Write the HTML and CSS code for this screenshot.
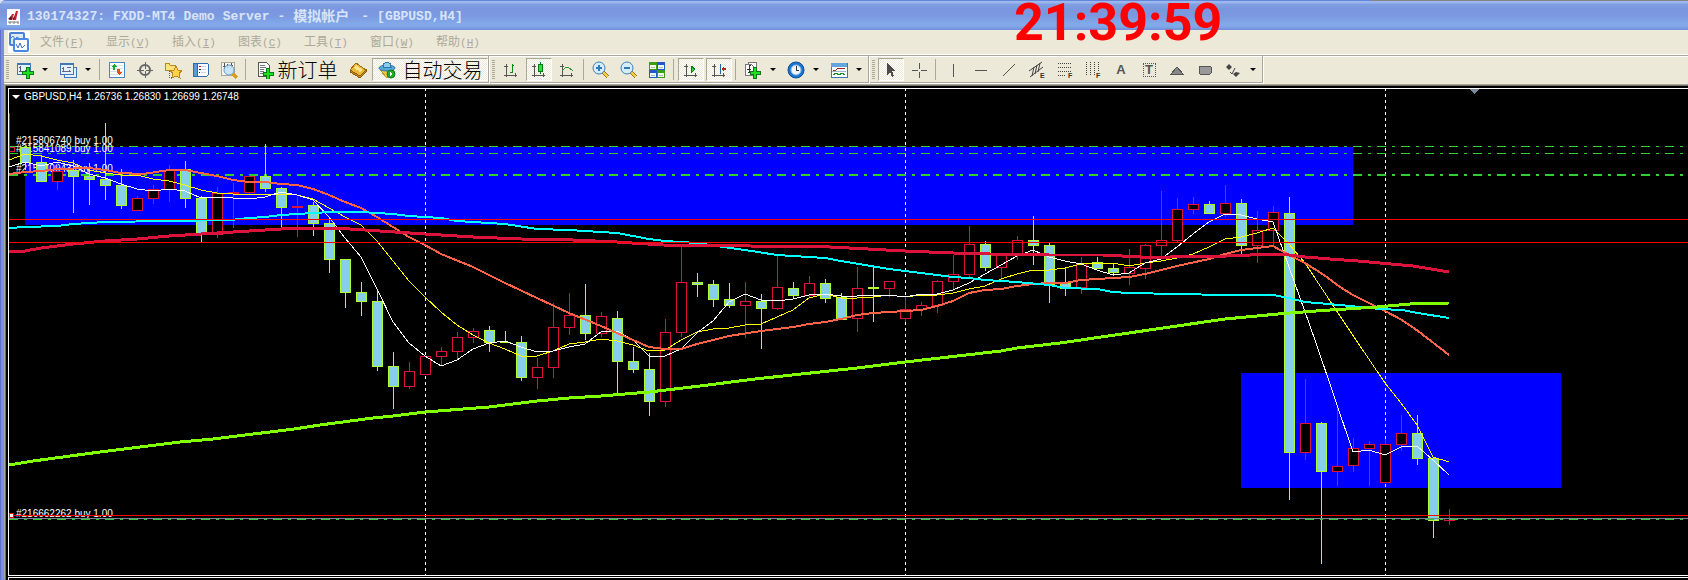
FILE: index.html
```html
<!DOCTYPE html>
<html lang="zh-CN">
<head>
  <meta charset="UTF-8">
  <title>130174327: FXDD-MT4 Demo Server - 模拟帐户 - [GBPUSD,H4]</title>
  <link rel="stylesheet" href="styles.css">
</head>
<body>

  <div class="window">

    <!-- Title bar -->
    <header class="titlebar">
      <svg class="app-icon" width="13" height="16" viewBox="0 0 13 16">
        <rect width="13" height="16" fill="#fff"/>
        <path d="M2 11L5 5H7L5 11ZM6 11L9 2H11L9 11Z" fill="#c8202c"/>
        <path d="M1 10L4 7L5 11ZM5 10L8 7L7 11Z" fill="#5c1418"/>
        <path d="M1 13H12M2 14H4M6 14H8M10 14H12" stroke="#777"/>
      </svg>
      <h1 class="title">
        <span>130174327:</span>
        <span>FXDD-MT4</span>
        <span>Demo</span>
        <span>Server</span>
        <span>-</span>
        <span class="title-cn">模拟帐户</span>
        <span>-</span>
        <span>[GBPUSD,H4]</span>
      </h1>
      <time class="clock">21:39:59</time>
    </header>

    <!-- Menu -->
    <nav class="menubar">
      <svg class="menu-icon" width="22" height="22" viewBox="0 0 22 22">
        <rect width="22" height="22" fill="#fff"/>
        <rect x="2" y="2" width="14" height="12" rx="1" fill="#dce9fa" stroke="#4a80d0" stroke-width="2"/>
        <path d="M3 7L5 5L7 8L9 6L12 8" fill="none" stroke="#4a80d0"/>
        <rect x="6" y="8" width="14" height="12" rx="1" fill="#fff" stroke="#4a88e0" stroke-width="2"/>
        <path d="M8 13L10 17L12 12L14 17L17 14" fill="none" stroke="#3a70c8"/>
      </svg>
      <button type="button">文件<span class="key">(<u>F</u>)</span></button>
      <button type="button">显示<span class="key">(<u>V</u>)</span></button>
      <button type="button">插入<span class="key">(<u>I</u>)</span></button>
      <button type="button">图表<span class="key">(<u>C</u>)</span></button>
      <button type="button">工具<span class="key">(<u>T</u>)</span></button>
      <button type="button">窗口<span class="key">(<u>W</u>)</span></button>
      <button type="button">帮助<span class="key">(<u>H</u>)</span></button>
    </nav>

    <!-- Toolbars -->
    <div class="toolbars">

      <div class="toolbar">
        <button type="button" class="tool" aria-label="新图表">
          <svg viewBox="0 0 18 18">
            <rect x="1" y="2" width="13" height="11" fill="#e4f0fb" stroke="#3f78b4"/>
            <path d="M1 3H14" stroke="#3f78b4" stroke-width="2"/>
            <path d="M4 5V11M3 6H5M3 10H11M9 9V11" stroke="#557" fill="none"/>
            <path d="M10 6H13V10H17V13H13V17H10V13H6V10H10Z" fill="#1fe01f" stroke="#0a7a14"/>
          </svg>
        </button>
        <button type="button" class="drop" aria-label="新图表列表"></button>
        <button type="button" class="tool" aria-label="配置文件">
          <svg viewBox="0 0 18 18">
            <rect x="5" y="6" width="12" height="10" fill="#e4f0fb" stroke="#3f78b4"/>
            <rect x="1" y="2" width="13" height="11" fill="#e4f0fb" stroke="#3f78b4"/>
            <path d="M1 3H14" stroke="#3f78b4" stroke-width="2"/>
            <path d="M4 6V11M3 7H5M3 10H12M10 9V11M8 6H12" stroke="#668" fill="none"/>
          </svg>
        </button>
        <button type="button" class="drop" aria-label="配置文件列表"></button>
        <span class="sep"></span>
        <button type="button" class="tool" aria-label="市场报价">
          <svg viewBox="0 0 18 18">
            <rect x="1" y="1" width="15" height="15" fill="#fff" stroke="#4a88c4"/>
            <path d="M2 4H15M2 7H15M2 10H15M2 13H15" stroke="#d4e2ee"/>
            <path d="M6 3L9 6H7V9H5V6H3Z" fill="#18a828"/>
            <path d="M9 8H12V11H14L11 14L8 11H9Z" fill="#e05018"/>
          </svg>
        </button>
        <button type="button" class="tool" aria-label="数据窗口">
          <svg viewBox="0 0 18 18">
            <circle cx="9" cy="9" r="5" fill="none" stroke="#666" stroke-width="2"/>
            <path d="M9 1V17M1 9H17" stroke="#666"/>
            <rect x="8" y="8" width="2" height="2" fill="#ece9d8"/>
          </svg>
        </button>
        <button type="button" class="tool" aria-label="导航">
          <svg viewBox="0 0 18 18">
            <path d="M1 2H5L6 4H11V9H1Z" fill="#ffe27a" stroke="#b88a18"/>
            <path d="M5 10V16H9" stroke="#555" fill="none" stroke-dasharray="1 1"/>
            <path d="M12 5L14 9L18 10L15 12L16 17L12 15L8 17L9 12L6 10L10 9Z" fill="#ffd24a" stroke="#b8861c"/>
          </svg>
        </button>
        <button type="button" class="tool" aria-label="终端">
          <svg viewBox="0 0 18 18">
            <rect x="1" y="2" width="15" height="13" rx="1" fill="#fff" stroke="#2c6cb0"/>
            <rect x="1" y="2" width="4" height="13" fill="#5a9ad8" stroke="#2c6cb0"/>
            <path d="M7 5H9" stroke="#e02020"/>
            <path d="M7 8H9M7 11H8" stroke="#222"/>
            <path d="M9 5H14M9 8H14M9 11H14" stroke="#cdd6de"/>
          </svg>
        </button>
        <button type="button" class="tool" aria-label="策略测试">
          <svg viewBox="0 0 18 18">
            <rect x="1" y="1" width="13" height="13" fill="#f6f4ee" stroke="#aaa69a"/>
            <path d="M4 2V8M3 5H6M7 3V7M11 2V7M10 4H13" stroke="#555"/>
            <circle cx="9" cy="9" r="5" fill="#bfe0f8" fill-opacity=".85" stroke="#6a9cc8"/>
            <path d="M13 13L17 17" stroke="#d89c20" stroke-width="3"/>
          </svg>
        </button>
        <span class="sep"></span>
        <button type="button" class="tool tool-text">
          <svg viewBox="0 0 18 18">
            <path d="M2 1H10L13 4V15H2Z" fill="#fafafa" stroke="#555"/>
            <path d="M4 4H9M4 6H10M4 8H8M4 10H8M4 12H7" stroke="#777"/>
            <path d="M10 7H13V11H17V14H13V18H10V14H7V11H10Z" fill="#1fe01f" stroke="#0a7a14"/>
          </svg>
          新订单
        </button>
        <button type="button" class="tool" aria-label="MetaEditor">
          <svg viewBox="0 0 18 18">
            <path d="M7 2L17 9L11 15L1 9Z" fill="#ecb838" stroke="#a06c10"/>
            <path d="M7 4L14 9L11 11L5 7Z" fill="#ffe490"/>
            <path d="M1 9V11L11 17L17 11V9L11 15Z" fill="#c88a20" stroke="#8c5c0c"/>
          </svg>
        </button>
        <button type="button" class="tool tool-text auto pressed">
          <svg viewBox="0 0 18 18">
            <path d="M2 9L9 17L16 9Z" fill="#f0c83c" stroke="#c0982c"/>
            <ellipse cx="9" cy="7" rx="8" ry="3" fill="#58a8d8" stroke="#2c78ac"/>
            <path d="M5 6C5 0 13 0 13 6Z" fill="#8ccaf0" stroke="#2c78ac"/>
            <circle cx="13" cy="13" r="4" fill="#1cac2c" stroke="#0c7c1c"/>
            <path d="M12 11L15 13L12 15Z" fill="#fff"/>
          </svg>
          自动交易
        </button>
      </div>

      <div class="toolbar">
        <button type="button" class="tool" aria-label="柱状图">
          <svg viewBox="0 0 18 18">
            <path d="M4 3V16M2 5H6M2 14H15M13 12V16" stroke="#555" fill="none"/>
            <path d="M10 3V12M10 4H12M8 11H10" stroke="#0a8a1a" stroke-width="1"/>
          </svg>
        </button>
        <button type="button" class="tool pressed" aria-label="阴阳烛">
          <svg viewBox="0 0 18 18">
            <path d="M4 3V16M2 5H6M2 14H15M13 12V16" stroke="#555" fill="none"/>
            <path d="M10 1V13" stroke="#0a7a14"/>
            <rect x="8" y="3" width="4" height="7" fill="#28e040" stroke="#0a7a14"/>
          </svg>
        </button>
        <button type="button" class="tool" aria-label="折线图">
          <svg viewBox="0 0 18 18">
            <path d="M4 3V16M2 5H6M2 14H15M13 12V16" stroke="#555" fill="none"/>
            <path d="M4 10L8 6H10L15 10" stroke="#2a9438" fill="none"/>
          </svg>
        </button>
        <span class="sep"></span>
        <button type="button" class="tool" aria-label="放大">
          <svg viewBox="0 0 18 18">
            <path d="M11 11L16 16" stroke="#a87810" stroke-width="4"/>
            <path d="M11 11L16 16" stroke="#f4cc48" stroke-width="2"/>
            <circle cx="7" cy="7" r="6" fill="#d4ecfc" stroke="#3c80bc" stroke-width="1"/>
            <path d="M7 4V10M4 7H10" stroke="#3078b4" stroke-width="2"/>
          </svg>
        </button>
        <button type="button" class="tool" aria-label="缩小">
          <svg viewBox="0 0 18 18">
            <path d="M11 11L16 16" stroke="#a87810" stroke-width="4"/>
            <path d="M11 11L16 16" stroke="#f4cc48" stroke-width="2"/>
            <circle cx="7" cy="7" r="6" fill="#d4ecfc" stroke="#3c80bc" stroke-width="1"/>
            <path d="M4 7H10" stroke="#3078b4" stroke-width="2"/>
          </svg>
        </button>
        <button type="button" class="tool" aria-label="平铺窗口">
          <svg viewBox="0 0 18 18">
            <path d="M1 1H9V9H1ZM9 9H17V17H9Z" fill="#3c9c14"/>
            <path d="M9 1H17V9H9ZM1 9H9V17H1Z" fill="#2458c8"/>
            <path d="M2 4H8V8H2ZM10 4H16V8H10ZM2 12H8V16H2ZM10 12H16V16H10Z" fill="#f2f8f0"/>
            <path d="M3 6H7M11 6H15M3 14H7M11 14H15" stroke="#a8c0b8"/>
          </svg>
        </button>
        <span class="sep"></span>
        <button type="button" class="tool pressed" aria-label="自动滚动">
          <svg viewBox="0 0 18 18">
            <path d="M4 3V16M2 5H6M2 14H15M13 12V16" stroke="#555" fill="none"/>
            <path d="M9 5L13 8L9 12Z" fill="#38d048" stroke="#0a7a14"/>
          </svg>
        </button>
        <button type="button" class="tool pressed" aria-label="图表平移">
          <svg viewBox="0 0 18 18">
            <path d="M4 3V16M2 5H6M2 14H15M13 12V16" stroke="#555" fill="none"/>
            <path d="M10 3V13" stroke="#1c64a0"/>
            <path d="M11 8L14 5V7H16V9H14V11Z" fill="#a82c0c"/>
          </svg>
        </button>
        <span class="sep"></span>
        <button type="button" class="tool" aria-label="指标列表">
          <svg viewBox="0 0 18 18">
            <path d="M4 1H12V13H4Z" fill="#fff" stroke="#777"/>
            <path d="M1 3H7L10 6V14H1Z" fill="#fafafa" stroke="#777"/>
            <path d="M7 4C5 4 5 6 5 12M3 8H7" stroke="#333" fill="none"/>
            <path d="M9 6H12V10H16V13H12V17H9V13H6V10H9Z" fill="#1fe01f" stroke="#0a7a14"/>
          </svg>
        </button>
        <button type="button" class="drop" aria-label="指标菜单"></button>
        <button type="button" class="tool" aria-label="时间周期">
          <svg viewBox="0 0 18 18">
            <circle cx="9" cy="9" r="8" fill="#1c74d0" stroke="#0c4c94"/>
            <circle cx="9" cy="9" r="5" fill="#eef6fc" stroke="#84b8e4"/>
            <path d="M9 5V9H12" stroke="#333" fill="none"/>
          </svg>
        </button>
        <button type="button" class="drop" aria-label="周期菜单"></button>
        <button type="button" class="tool" aria-label="模板">
          <svg viewBox="0 0 18 18">
            <rect x="1" y="2" width="16" height="14" fill="#fff" stroke="#3878b4"/>
            <rect x="1" y="2" width="16" height="4" fill="#64a4dc"/>
            <path d="M3 9H6L8 7H10L12 8L15 7" stroke="#982c0c" fill="none"/>
            <path d="M2 10H16" stroke="#9cb8cc"/>
            <path d="M3 14L6 12L9 14L12 12L15 14" stroke="#189028" fill="none"/>
          </svg>
        </button>
        <button type="button" class="drop" aria-label="模板菜单"></button>
      </div>

      <div class="toolbar">
        <button type="button" class="tool pressed" aria-label="光标">
          <svg viewBox="0 0 18 18"><path d="M5 2V14L8 11L10 16L12 15L10 10H14Z" fill="#4c4c4c"/></svg>
        </button>
        <button type="button" class="tool" aria-label="十字准线">
          <svg viewBox="0 0 18 18"><path d="M9 2V8M9 11V17M2 9H8M11 9H17" stroke="#555" fill="none"/></svg>
        </button>
        <span class="sep"></span>
        <button type="button" class="tool" aria-label="垂直线">
          <svg viewBox="0 0 18 18"><path d="M9 3V16" stroke="#555"/></svg>
        </button>
        <button type="button" class="tool" aria-label="水平线">
          <svg viewBox="0 0 18 18"><path d="M3 9H15" stroke="#555"/></svg>
        </button>
        <button type="button" class="tool" aria-label="趋势线">
          <svg viewBox="0 0 18 18" class="smooth"><path d="M3 15L15 3" stroke="#555"/></svg>
        </button>
        <button type="button" class="tool" aria-label="等距通道">
          <svg viewBox="0 0 18 18" class="smooth">
            <path d="M1 10L14 1M2 16L15 6M4 15L6 6M7 13L9 4M10 11L12 2" stroke="#444"/>
            <text x="12" y="17">E</text>
          </svg>
        </button>
        <button type="button" class="tool" aria-label="斐波那契回调">
          <svg viewBox="0 0 18 18">
            <path d="M2 2H15M2 6H15M2 10H15M2 14H10" stroke="#444" stroke-dasharray="1 1"/>
            <text x="12" y="17">F</text>
          </svg>
        </button>
        <button type="button" class="tool" aria-label="斐波那契时间">
          <svg viewBox="0 0 18 18">
            <path d="M2 1V15M6 1V15M10 1V15M14 1V10" stroke="#444" stroke-dasharray="1 1"/>
            <text x="12" y="17">F</text>
          </svg>
        </button>
        <button type="button" class="tool letter">A</button>
        <button type="button" class="tool letter label-tool"><span>T</span></button>
        <button type="button" class="tool" aria-label="三角形">
          <svg viewBox="0 0 18 18"><path d="M3 13L9 6L15 13Z" fill="#888" stroke="#555"/></svg>
        </button>
        <button type="button" class="tool" aria-label="矩形">
          <svg viewBox="0 0 18 18"><rect x="3" y="5" width="12" height="8" rx="1" fill="#999" stroke="#555"/></svg>
        </button>
        <button type="button" class="tool" aria-label="箭头">
          <svg viewBox="0 0 18 18" class="smooth">
            <path d="M5 3L8 6L5 9L2 6ZM12 11L16 12L12 16L9 13Z" fill="#444"/>
            <path d="M6 11L8 13L11 7" stroke="#444" fill="none"/>
          </svg>
        </button>
        <button type="button" class="drop" aria-label="箭头菜单"></button>
      </div>
    </div>

    <!-- Chart -->
    <main class="workspace">
      <section class="chart">
        <svg id="chart" role="img" aria-label="GBPUSD,H4">
          <g id="plot" transform="translate(-9,-89)"></g>
        </svg>
        <h2 class="quote">
          <span class="quote-arrow"></span>
          <span>GBPUSD,H4</span>
          <span>1.26736 1.26830 1.26699 1.26748</span>
        </h2>
      </section>
      <section class="subchart"></section>
    </main>

  </div>

  <script src="chart.js"></script>
</body>
</html>
```
FILE: styles.css
```css
/* ================================
   Window
   ================================ */
* {
  box-sizing: border-box;
}

body {
  margin: 0;
  background: #dfe4f4;
  font-family: "Liberation Sans", "Noto Sans CJK SC", sans-serif;
}

.window {
  position: relative;
  display: flex;
  flex-direction: column;
  min-height: 100vh;
  background: linear-gradient(to right, #5f70d0 1px, #7b8fdd 1px);
  border-top-left-radius: 6px;
}

button {
  padding: 0;
  border: 0;
  background: none;
  color: inherit;
  font: inherit;
}

/* ================================
   Title bar
   ================================ */
.titlebar {
  display: flex;
  align-items: center;
  gap: 7px;
  height: 30px;
  padding: 3px 0 0 7px;
  background:
    linear-gradient(to right, #6485dc 1371px, #848284 1371px) 0 0 / 100% 1px no-repeat,
    linear-gradient(#6a8ce4 1px, #9db9ee 1px, #9ab4ec 3px, #7f9fe2 4px, #7a96df 10px, #7b99e1 16px, #82a9ea 24px, #80a6e8 27px, #7592de 29px);
  border-top-left-radius: 6px;
}

.title {
  display: flex;
  align-items: center;
  gap: 8px;
  margin: 0;
  color: #d8e4f8;
  font: bold 13px/20px "Liberation Mono", "Noto Sans CJK SC", monospace;
}

.title-cn {
  margin-right: 4px;
  font-size: 14px;
}

/* Desktop clock floating over the window */
.clock {
  position: absolute;
  top: 0;
  left: 1014px;
  color: #f00;
  font: bold 52px/46px Roboto, "Liberation Sans", sans-serif;
}

/* ================================
   Menu
   ================================ */
.menubar {
  display: flex;
  align-items: center;
  height: 24px;
  margin-left: 4px;
  padding-left: 4px;
  background: #ece9d8;
  color: #aca899;
  font: 12px/16px "Noto Sans CJK SC", sans-serif;
}

.menu-icon {
  margin-right: 10px;
}

.menubar button {
  width: 66px;
  text-align: left;
}

.key {
  font: 11px/16px "Liberation Mono", monospace;
}

/* ================================
   Toolbars
   ================================ */
.toolbars {
  display: flex;
  height: 30px;
  margin-left: 4px;
  border-top: 1px solid #fff;
  background: linear-gradient(#aca899 1px, #fff 1px, #fff 2px, #ece9d8 2px);
  color: #000;
}

.toolbar {
  display: flex;
  align-items: center;
  margin-bottom: 1px;
  padding: 3px 0 1px 7px;
  border-right: 1px solid #aca899;
  border-bottom: 1px solid #aca899;
  box-shadow: 1px 1px #fff;
  background: repeating-linear-gradient(#aca899 0 1px, transparent 1px 2px) 2px 5px / 3px 20px no-repeat;
}

.toolbar + .toolbar {
  margin-left: 1px;
}

.tool {
  display: flex;
  flex: none;
  align-items: center;
  justify-content: center;
  width: 26px;
  height: 23px;
  margin: 0 1px;
}

.tool svg {
  flex: none;
  width: 18px;
  height: 18px;
  shape-rendering: crispEdges;
}

.tool svg circle,
.tool svg ellipse,
.tool svg.smooth {
  shape-rendering: auto;
}

.tool text {
  fill: #333;
  font: bold 7px "Liberation Sans", sans-serif;
}

.tool-text {
  gap: 4px;
  width: 95px;
  margin: 0;
  font: 300 20px/22px "Noto Sans CJK SC", sans-serif;
  white-space: nowrap;
}

.auto {
  gap: 7px;
  width: 116px;
}

.pressed {
  border: 1px solid;
  border-color: #aca899 #fff #fff #aca899;
  background: repeating-conic-gradient(#fff 0 25%, #ece9d8 0 50%) 0 0 / 2px 2px;
}

.drop {
  flex: none;
  width: 15px;
  height: 23px;
}

.drop::before {
  content: "";
  display: block;
  width: 0;
  margin-left: 3px;
  border: 3px solid transparent;
  border-top-color: #000;
  border-bottom: 0;
}

.sep {
  flex: none;
  width: 6px;
  height: 21px;
  background: linear-gradient(#aca899, #aca899) 2px 0 / 1px 100% no-repeat;
}

.letter {
  color: #555;
  font: bold 13px/14px "Liberation Sans", sans-serif;
}

.label-tool span {
  width: 13px;
  height: 14px;
  border: 1px dotted #555;
  line-height: 12px;
}

/* ================================
   Chart
   ================================ */
.workspace {
  display: flex;
  flex: 1;
  flex-direction: column;
  gap: 1px;
  margin: 1px 0 0 5px;
  padding: 2px 0 0 2px;
  border: solid #716f64;
  border-width: 1px 0 0 1px;
  background: #000;
  box-shadow: -1px -1px #aca899;
}

.chart {
  position: relative;
  flex: 1;
  border: solid #fff;
  border-width: 1px 0 1px 1px;
}

.chart svg {
  display: block;
  width: 100%;
  height: 486px;
  shape-rendering: crispEdges;
}

.chart text {
  fill: #fff;
  font: 10px "Liberation Sans", sans-serif;
}

.subchart {
  height: 3px;
  border: solid #fff;
  border-width: 1px 0 0 1px;
}

.quote {
  position: absolute;
  top: 1px;
  left: 3px;
  display: flex;
  align-items: center;
  gap: 4px;
  margin: 0;
  color: #fff;
  font: 10px/14px "Liberation Sans", sans-serif;
  white-space: nowrap;
}

.quote-arrow {
  border: 4px solid transparent;
  border-top-color: #fff;
  border-bottom: 0;
}
```
FILE: chart.js
```js
const NS = "http://www.w3.org/2000/svg";
const plot = document.getElementById("plot");

// Bars are 16px apart, the first one sits at x = 9
const FIRST = 9;
const STEP = 16;

// [high, body top, body bottom, low, direction]
const candles = [
  [113, 147, 152, 166, "u"], [146, 147, 163, 170, "d"], [155, 162, 182, 182, "d"], [163, 171, 182, 190, "u"],
  [160, 170, 177, 213, "d"], [163, 176, 180, 205, "d"], [123, 179, 186, 200, "d"], [169, 185, 206, 209, "d"],
  [196, 198, 211, 211, "u"], [185, 189, 199, 204, "u"], [165, 170, 190, 202, "u"], [161, 169, 199, 208, "d"],
  [196, 198, 234, 242, "d"], [187, 193, 235, 238, "u"], [183, 192, 194, 228, "u"], [175, 176, 193, 194, "u"],
  [144, 176, 189, 192, "d"], [187, 188, 208, 228, "d"], [197, 206, 208, 237, "u"], [202, 205, 224, 236, "d"],
  [220, 223, 260, 273, "d"], [259, 259, 293, 308, "d"], [282, 292, 302, 316, "d"], [290, 301, 367, 371, "d"],
  [352, 366, 387, 409, "d"], [362, 371, 387, 389, "u"], [356, 356, 375, 375, "u"], [347, 351, 357, 366, "u"],
  [332, 337, 352, 359, "u"], [328, 331, 338, 343, "u"], [326, 330, 343, 352, "d"], [331, 342, 343, 343, "d"],
  [336, 342, 378, 381, "d"], [358, 367, 378, 389, "u"], [303, 327, 368, 378, "u"], [293, 315, 328, 335, "u"],
  [284, 315, 334, 340, "d"], [312, 316, 334, 337, "u"], [311, 318, 362, 394, "d"], [347, 361, 370, 373, "d"],
  [353, 369, 402, 416, "d"], [319, 332, 402, 407, "u"], [247, 282, 333, 337, "u"], [273, 282, 285, 297, "d"],
  [280, 284, 300, 307, "d"], [283, 299, 306, 308, "d"], [282, 301, 306, 338, "u"], [294, 301, 309, 349, "d"],
  [256, 287, 309, 310, "u"], [282, 288, 296, 299, "d"], [276, 283, 296, 298, "u"], [279, 283, 299, 303, "d"],
  [293, 297, 320, 320, "d"], [267, 288, 319, 332, "u"], [267, 287, 289, 322, "d"], [281, 281, 289, 297, "u"],
  [297, 309, 319, 322, "u"], [302, 305, 310, 316, "u"], [280, 281, 306, 313, "u"], [255, 274, 282, 290, "u"],
  [226, 244, 275, 277, "u"], [241, 244, 268, 271, "d"], [255, 255, 268, 280, "u"], [236, 240, 255, 260, "u"],
  [216, 240, 246, 265, "d"], [243, 245, 285, 303, "d"], [267, 283, 289, 296, "d"], [257, 263, 288, 294, "u"],
  [257, 262, 269, 269, "d"], [264, 268, 273, 276, "d"], [249, 267, 274, 285, "u"], [244, 245, 269, 279, "u"],
  [191, 240, 246, 256, "u"], [198, 209, 241, 242, "u"], [197, 204, 210, 214, "u"], [201, 204, 214, 214, "d"],
  [185, 203, 214, 217, "u"], [199, 203, 246, 254, "d"], [211, 230, 246, 263, "u"], [206, 212, 231, 247, "u"],
  [197, 213, 453, 500, "d"], [379, 423, 453, 460, "u"], [422, 423, 472, 564, "d"], [407, 466, 472, 486, "u"],
  [438, 448, 466, 472, "u"], [441, 444, 449, 486, "u"], [439, 444, 483, 483, "u"], [415, 433, 445, 451, "u"],
  [415, 433, 459, 465, "d"], [458, 458, 521, 538, "d"], [509, 518, 521, 525, "u"]
];

// Moving averages, drawn in this order
const averages = [
  { color: "#ffff00", width: 1, points: "9,160 25,154 41,156 57,160 73,163 89,170 105,173 121,175 137,175 153,179 169,181 185,185 201,190 217,193 233,194 281,194 297,195 313,199 329,208 345,217 361,225 377,241 393,261 409,281 425,297 441,312 457,325 473,335 489,343 505,349 521,356 537,356 553,351 569,344 585,342 601,339 617,341 633,345 649,351 665,350 681,340 697,332 713,329 729,328 745,325 761,324 777,317 793,310 809,298 825,294 841,298 857,298 873,297 889,295 905,297 921,295 937,295 953,293 969,289 985,286 1001,279 1017,274 1033,270 1049,270 1065,268 1081,264 1097,263 1113,263 1129,266 1145,263 1161,261 1177,258 1193,254 1209,247 1225,239 1241,237 1257,233 1273,228 1289,244 1305,263 1340,316 1356,340 1385,383 1401,403 1417,425 1433,457 1449,462" },
  { color: "#ffffff", width: 1, points: "9,167 25,162 41,166 57,162 73,166 89,174 105,178 121,184 137,189 153,191 169,189 185,191 201,198 217,197 233,198 249,199 265,197 281,192 297,195 313,200 329,217 345,238 361,257 377,289 393,322 409,343 425,356 441,366 457,360 473,349 489,343 505,341 521,347 537,352 553,351 569,347 585,344 601,332 617,331 633,340 649,356 665,356 681,349 697,333 713,321 729,302 745,294 761,300 777,301 793,299 809,295 825,294 841,296 857,296 873,295 889,295 905,297 921,294 937,294 953,290 969,283 985,274 1001,265 1017,256 1033,250 1049,257 1065,261 1081,264 1097,270 1113,275 1129,273 1145,263 1161,259 1177,247 1193,234 1209,222 1225,214 1241,215 1257,219 1273,222 1289,267 1315,340 1353,452 1369,450 1385,455 1401,447 1417,446 1433,460 1449,475" },
  { color: "#ff6347", width: 2, points: "9,174 25,172 41,171 57,169 89,168 105,170 121,173 143,174 169,170 185,170 201,173 217,176 233,180 249,182 265,182 281,184 297,185 313,189 329,195 345,202 361,208 377,217 409,237 425,245 441,254 473,267 505,283 537,298 569,313 601,326 617,333 633,340 649,347 665,349 681,349 697,344 729,336 761,331 793,327 809,324 825,322 841,319 857,315 873,313 889,312 905,311 921,310 937,306 953,301 969,293 985,290 1001,289 1017,286 1033,284 1049,283 1065,283 1081,280 1097,279 1129,277 1145,274 1177,266 1209,259 1225,254 1241,250 1273,246 1289,255 1305,263 1324,275 1340,287 1353,295 1385,311 1402,320 1418,331 1449,355" },
  { color: "#00ffff", width: 2, points: "9,228 25,227 57,226 73,224 105,222 167,221 230,220 249,218 265,217 281,215 313,213 332,212 361,212 377,213 393,214 409,216 441,218 457,221 489,223 505,224 537,229 569,230 585,231 617,233 633,236 649,239 665,241 697,243 723,247 745,250 777,255 793,256 809,257 825,258 841,261 889,269 905,271 953,277 969,278 985,280 1017,282 1049,285 1065,288 1097,289 1113,292 1129,293 1225,295 1273,295 1289,298 1305,302 1340,305 1380,309 1402,310 1418,313 1449,318" },
  { color: "#dc143c", width: 3, points: "9,251 25,251 41,248 73,244 105,241 137,239 169,236 201,234 233,232 265,230 297,228 350,229 425,234 473,237 521,239 573,240 617,242 663,245 750,246 830,247 905,251 953,253 990,254 1049,255 1103,255 1140,257 1170,257 1227,256 1273,254 1289,255 1305,257 1330,259 1358,261 1380,263 1413,266 1449,272" },
  { color: "#7fff00", width: 3, points: "9,465 33,461 100,452 180,442 213,439 294,429 320,425 373,418 393,416 425,412 489,407 537,401 569,398 601,396 649,392 700,386 755,379 857,368 905,362 1001,351 1017,348 1060,343 1225,319 1289,313 1330,310 1377,307 1410,304 1449,303" }
];

function add(name, attrs, text) {
  const el = document.createElementNS(NS, name);
  for (const key in attrs) {
    el.setAttribute(key, attrs[key]);
  }
  if (text) {
    el.textContent = text;
  }
  plot.appendChild(el);
}

function rect(x, y, width, height, fill) {
  add("rect", { x, y, width, height, fill });
}

function hline(y, color, width = 1, dash = "none") {
  add("line", {
    x1: 9, y1: y + width / 2, x2: "101%", y2: y + width / 2,
    stroke: color, "stroke-width": width, "stroke-dasharray": dash
  });
}

function vline(x, y1, y2, color) {
  add("line", { x1: x + 0.5, y1, x2: x + 0.5, y2, stroke: color, "stroke-dasharray": "3 3" });
}

// Zones
rect(25, 147, 1328, 78, "#0000ff");
rect(1241, 373, 320, 115, "#0000ff");

// Day separators, yellow where they cross a zone
[425, 905, 1385].forEach(x => vline(x, 88, 576, "#ffffff"));
[425, 905].forEach(x => vline(x, 148, 225, "#ffff60"));
vline(1385, 376, 488, "#ffff60");

// Order levels
hline(146, "#32cd32", 1, "9 6 3 6");
hline(153, "#32cd32", 1, "9 6 3 6");
hline(174, "#32cd32", 2, "9 6 3 6");

// Order labels
add("text", { x: 16, y: 144 }, "#215806740 buy 1.00");
add("text", { x: 16, y: 152 }, "#215841089 buy 1.00");
add("text", { x: 16, y: 172 }, "#215840943 buy 1.00");
add("text", { x: 16, y: 517 }, "#216662262 buy 1.00");

// Candles
candles.forEach(([high, top, bottom, low, dir], i) => {
  const x = FIRST + i * STEP;
  const color = dir === "u" ? "#dc143c" : "#adff2f";
  // the first bar is cut off by the chart edge
  const left = Math.max(x - 5, FIRST);
  rect(x, high, 1, low - high, color);
  rect(left, top, x + 6 - left, Math.max(bottom - top, 1), color);
  if (bottom - top > 2) {
    rect(left + 1, top + 1, x + 4 - left, bottom - top - 2, dir === "u" ? "#000000" : "#87ceeb");
  }
});

averages.forEach(({ color, width, points }) => {
  add("polyline", { points, fill: "none", stroke: color, "stroke-width": width });
});

// Price levels
hline(219, "#ff0000");
hline(242, "#ff0000");
hline(515, "#ff0000");
hline(518, "#778899");
hline(519, "#32cd32", 1, "9 6 3 6");

// Anchor of the selected level and the shift marker
rect(9, 513, 5, 5, "#ff0000");
rect(10, 514, 3, 3, "#ffffff");
add("path", { d: "M1470 89H1479L1475 94H1474Z", fill: "#778899" });
```
